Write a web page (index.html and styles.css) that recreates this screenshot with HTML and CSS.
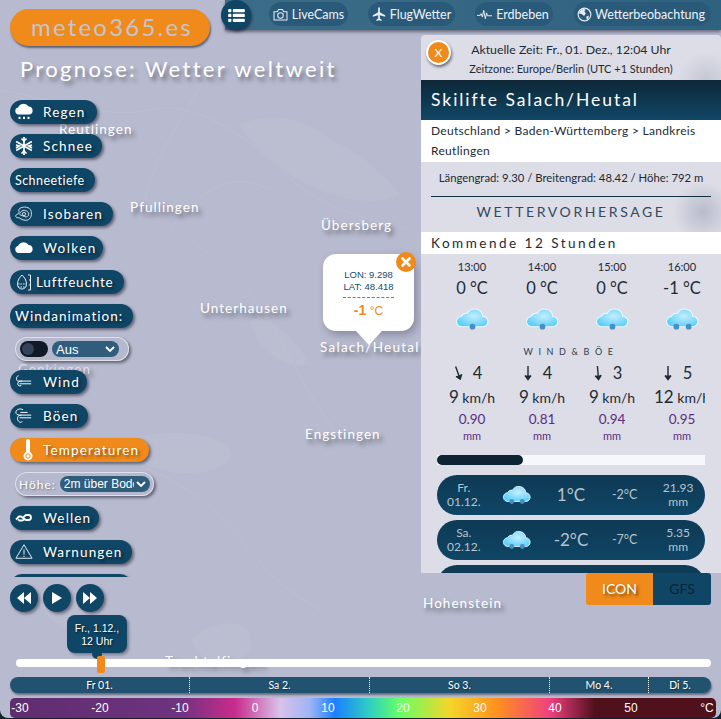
FILE: index.html
```html
<!DOCTYPE html>
<html lang="de">
<head>
<meta charset="utf-8">
<title>meteo365.es</title>
<link rel="stylesheet" href="styles.css">
</head>
<body>
<svg class="defs" width="0" height="0" aria-hidden="true">
  <defs>
    <radialGradient id="cl" cx="55%" cy="40%" r="60%">
      <stop offset="0" stop-color="#c4eefc"/>
      <stop offset="1" stop-color="#5fd0fa"/>
    </radialGradient>
    <symbol id="wx1" viewBox="0 0 34 24">
      <path d="M7 20a5 5 0 0 1-1-10 6 6 0 0 1 6-3 8 8 0 0 1 15 3 5 5 0 0 1 0 10z" fill="url(#cl)" stroke="#eafaff" stroke-width="1"/>
      <circle cx="17" cy="20" r="2.800" fill="#4a8fc4"/>
    </symbol>
    <symbol id="wx2" viewBox="0 0 34 24">
      <path d="M7 20a5 5 0 0 1-1-10 6 6 0 0 1 6-3 8 8 0 0 1 15 3 5 5 0 0 1 0 10z" fill="url(#cl)" stroke="#eafaff" stroke-width="1"/>
      <circle cx="11" cy="20" r="2.800" fill="#4a8fc4"/>
      <circle cx="23" cy="20" r="2.800" fill="#4a8fc4"/>
    </symbol>
    <symbol id="arrow" viewBox="0 0 12 16">
      <path d="M6 1v13M3 10.500 6 14.500l3-4" fill="#1d2b36" stroke="#1d2b36" stroke-width="1.400"/>
    </symbol>
  </defs>
</svg>

<div class="app">
  <div class="map">
    <svg class="map-art" viewBox="0 0 721 719" aria-hidden="true">
      <g fill="#c3c6d7" opacity=".3">
        <path d="M240 125c30-15 70-5 90 15 25 10 50 30 70 55-30 15-80 0-110-20-20-15-40-30-50-50z"/>
        <path d="M130 440c30-10 80-10 100 10 10 20-40 30-70 20-20-5-40-15-30-30z"/>
        <path d="M190 640c30-25 70-20 60 10-10 20-50 20-60-10z"/>
        <path d="M40 605c20-15 50-5 60 15-20 15-50 10-60-15z"/>
        <path d="M250 320c25-5 45 20 60 45-25 5-55-15-60-45z"/>
      </g>
      <g fill="none" stroke="#c6c9d9" stroke-width="1" opacity=".35">
        <path d="M0 90c50 10 110 30 150 20s90 20 130 60 90 50 130 60"/>
        <path d="M170 230c30-40 60-60 100-40"/>
        <path d="M215 60c-20 40-60 90-70 140"/>
        <path d="M190 240c40 30 70 60 90 100s40 70 60 100"/>
        <path d="M30 430c50 20 120 30 170 70s60 80 120 110"/>
      </g>
    </svg>
    <span class="place p-reut">Reutlingen</span>
    <span class="place p-pful">Pfullingen</span>
    <span class="place p-uber">Übersberg</span>
    <span class="place p-unte">Unterhausen</span>
    <span class="place p-sala">Salach/Heutal</span>
    <span class="place p-genk">Genkingen</span>
    <span class="place p-engs">Engstingen</span>
    <span class="place p-hohe">Hohenstein</span>
    <span class="place p-troc">Trochtelfingen</span>
    <div class="popup">
      <div class="popup-close">
        <svg viewBox="0 0 12 12" width="12" height="12"><path d="M2.500 2.500l7 7M9.500 2.500l-7 7" stroke="#fff" stroke-width="2.600" stroke-linecap="round"/></svg>
      </div>
      <div class="popup-coord">LON: 9.298</div>
      <div class="popup-coord">LAT: 48.418</div>
      <div class="popup-temp"><b>-1</b> <span>°C</span></div>
    </div>
  </div>

  <nav class="nav">
    <button class="nav-menu" aria-label="Menü">
      <svg viewBox="0 0 18 14" width="17" height="13"><g fill="#fff"><rect x="0" y="0" width="3.500" height="3.500" rx="1"/><rect x="0" y="5.200" width="3.500" height="3.500" rx="1"/><rect x="0" y="10.400" width="3.500" height="3.500" rx="1"/><rect x="5" y="0" width="13" height="3.500" rx="1"/><rect x="5" y="5.200" width="13" height="3.500" rx="1"/><rect x="5" y="10.400" width="13" height="3.500" rx="1"/></g></svg>
    </button>
    <a class="nav-pill n-live">
      <svg viewBox="0 0 16 14" width="15" height="13"><g fill="none" stroke="#e6edf2" stroke-width="1.100"><path d="M1 4h3.500L6 1.500h4L11.500 4H15v9H1z" stroke-linejoin="round"/><circle cx="8" cy="8" r="3"/></g></svg>
      LiveCams</a>
    <a class="nav-pill n-flug">
      <svg viewBox="0 0 16 16" width="14" height="14"><path d="M7 1c0-1 2-1 2 0v5l6 3.500V11L9 9.500V13l2 1.500V16l-3-1-3 1v-1.500L7 13V9.500L1 11V9.500L7 6z" fill="#e6edf2"/></svg>
      FlugWetter</a>
    <a class="nav-pill n-erd">
      <svg viewBox="0 0 18 12" width="15" height="11"><path d="M0 7h4l1-2 1.500 4L8 1l2 10 1.500-7 1 3.500H18" fill="none" stroke="#e6edf2" stroke-width="1.200"/></svg>
      Erdbeben</a>
    <a class="nav-pill n-wet">
      <svg viewBox="0 0 16 16" width="15" height="15"><circle cx="8" cy="8" r="6.800" fill="none" stroke="#e6edf2" stroke-width="1.200"/><path d="M3 4.500l3-2.500 3 .5-1 2.500L9.500 7l-2 2.500L5 7.500 2 7zM10 10l3-1-1.500 4-1.500-.5z" fill="#e6edf2"/></svg>
      Wetterbeobachtung</a>
  </nav>

  <aside class="side">
    <div class="logo">meteo365.es</div>
    <h1 class="title">Prognose: Wetter weltweit</h1>
    <div class="layers">
      <a class="btn b-regen"><svg class="ic" viewBox="0 0 18 18"><path d="M3.500 11.500A3.500 3.500 0 0 1 3 4.600 6 6 0 0 1 13.600 3.600 4 4 0 0 1 14.500 11.500z" fill="#fff"/><g fill="#fff"><rect x="3.500" y="13.800" width="2" height="2.200"/><rect x="8" y="13.800" width="2" height="2.200"/><rect x="12.500" y="13.800" width="2" height="2.200"/></g></svg><span>Regen</span></a>
      <a class="btn b-schnee"><svg class="ic" viewBox="0 0 18 18"><g stroke="#fff" stroke-width="1.700" fill="none"><path d="M9 0v18M1.200 4.500l15.600 9M16.800 4.500l-15.600 9"/><path d="M6.500 1.500 9 4l2.500-2.500M6.500 16.500 9 14l2.500 2.500M1 8l3.400 1L1 11M17 8l-3.400 1L17 11"/></g></svg><span>Schnee</span></a>
      <a class="btn btn-plain b-tiefe"><span>Schneetiefe</span></a>
      <a class="btn b-iso"><svg class="ic" viewBox="0 0 20 18"><g fill="none" stroke="#e6edf2" stroke-width="1"><path d="M5 3c4-3 12-2 13 3s-1 10-6 10-6-3-9-3-3-3 0-4 0-4 2-6z"/><path d="M7 6c2-2 7-1 8 2s-2 5-4 4-3-1-5-2 0-2 1-4z"/><circle cx="10" cy="9" r="1.800"/></g></svg><span>Isobaren</span></a>
      <a class="btn b-wolken"><svg class="ic" viewBox="0 0 18 18"><path d="M3.500 14A3.500 3.500 0 0 1 3 7.100 6 6 0 0 1 13.600 6.100 4 4 0 0 1 14.500 14z" fill="#fff"/></svg><span>Wolken</span></a>
      <a class="btn b-luft"><svg class="ic ic-luft" viewBox="0 0 14 17"><g fill="none" stroke="#e6edf2" stroke-width="1"><path d="M5 1c2.500 2.500 4.500 5 4.500 9.500a4.500 4.500 0 0 1-9 0C.5 6 2.500 3.500 5 1z"/><path d="M1 10h8M1 13h8" stroke-dasharray="1.500 1"/><path d="M11 1h2.500v15H11M12 6h1.500M12 11h1.500"/></g></svg><span>Luftfeuchte</span></a>
      <a class="btn btn-plain b-anim"><span>Windanimation:</span></a>
      <div class="group g-anim">
        <span class="toggle"><i></i></span>
        <span class="select s-aus">Aus<svg viewBox="0 0 10 6" width="10" height="6"><path d="M1 1l4 4 4-4" fill="none" stroke="#fff" stroke-width="1.800"/></svg></span>
      </div>
      <a class="btn b-wind"><svg class="ic" viewBox="0 0 20 16"><g fill="none" stroke="#fff" stroke-width="1.100"><path d="M4 1C1 2 1 5 3 7h15M5 10h13M8 7c-3 0-5 1-5 3s2 3 4 2"/></g></svg><span>Wind</span></a>
      <a class="btn b-boen"><svg class="ic" viewBox="0 0 20 18"><g fill="none" stroke="#fff" stroke-width="1.100"><path d="M9 2C5 0 1 2 1 5c0 2 2 3 4 3h13M6 5h8M5 11h13M7 8c-3 0-5 2-4 5s4 4 5 2"/></g></svg><span>Böen</span></a>
      <a class="btn btn-on b-temp"><svg class="ic ic-temp" viewBox="0 0 12 22"><path d="M4 2a2 2 0 0 1 4 0v11a4.500 4.500 0 1 1-4 0z" fill="#fff"/><circle cx="6" cy="17" r="2.200" fill="none" stroke="#ef8a1b"/></svg><span>Temperaturen</span></a>
      <div class="group g-hoehe">
        <span class="group-label">Höhe:</span>
        <span class="select s-hoehe"><em>2m über Boden</em><svg viewBox="0 0 10 6" width="10" height="6"><path d="M1 1l4 4 4-4" fill="none" stroke="#fff" stroke-width="1.800"/></svg></span>
      </div>
      <a class="btn b-wellen"><svg class="ic" viewBox="0 0 18 18"><g fill="none" stroke="#fff" stroke-width="1.800"><path d="M1 10.500 4 7.500h2l5 3.500h2.500a2 2 0 0 0 0-5H11L8.500 8"/><path d="M9.500 10.500 7 11.500H4.500L3 10.500"/></g></svg><span>Wellen</span></a>
      <a class="btn b-warn"><svg class="ic ic-warn" viewBox="0 0 20 18"><g fill="none" stroke="#e6edf2" stroke-width="1.100"><path d="M10 1.500 19 16.500H1z" stroke-linejoin="round"/><path d="M10 6.500v6M10 13.800v1.400"/></g></svg><span>Warnungen</span></a>
      <a class="btn b-warn"><span>&nbsp;</span></a>
    </div>
    <div class="player">
      <button class="round" aria-label="Zurück"><svg viewBox="0 0 14 12" width="14" height="12"><path d="M7 0v12L0 6zM14 0v12L7 6z" fill="#fff"/></svg></button>
      <button class="round" aria-label="Abspielen"><svg viewBox="0 0 10 12" width="10" height="12"><path d="M0 0v12l10-6z" fill="#fff"/></svg></button>
      <button class="round" aria-label="Vor"><svg viewBox="0 0 14 12" width="14" height="12"><path d="M0 0v12l7-6zM7 0v12l7-6z" fill="#fff"/></svg></button>
    </div>
  </aside>

  <section class="right">
    <div class="panel">
      <header class="clock">
        <button class="panel-close">X</button>
        <div class="clock-now">Aktuelle Zeit: Fr., 01. Dez., 12:04 Uhr</div>
        <div class="clock-zone">Zeitzone: Europe/Berlin (UTC +1 Stunden)</div>
      </header>
      <h2 class="station">Skilifte Salach/Heutal</h2>
      <div class="crumbs">Deutschland &gt; Baden-Württemberg &gt; Landkreis Reutlingen</div>
      <div class="geo">Längengrad: 9.30 / Breitengrad: 48.42 / Höhe: 792 m</div>
      <div class="heading">WETTERVORHERSAGE</div>
      <div class="subhead">Kommende 12 Stunden</div>
      <div class="hours">
        <div class="hour">
          <div class="h-time">13:00</div><div class="h-temp">0 °C</div>
          <svg class="h-icon"><use href="#wx1"/></svg>
          <div class="h-dir"><svg class="dir d-sw"><use href="#arrow"/></svg><span>4</span></div>
          <div class="h-speed"><b>9</b> km/h</div><div class="h-rain">0.90</div><div class="h-mm">mm</div>
        </div>
        <div class="hour">
          <div class="h-time">14:00</div><div class="h-temp">0 °C</div>
          <svg class="h-icon"><use href="#wx1"/></svg>
          <div class="h-dir"><svg class="dir"><use href="#arrow"/></svg><span>4</span></div>
          <div class="h-speed"><b>9</b> km/h</div><div class="h-rain">0.81</div><div class="h-mm">mm</div>
        </div>
        <div class="hour">
          <div class="h-time">15:00</div><div class="h-temp">0 °C</div>
          <svg class="h-icon"><use href="#wx1"/></svg>
          <div class="h-dir"><svg class="dir d-s"><use href="#arrow"/></svg><span>3</span></div>
          <div class="h-speed"><b>9</b> km/h</div><div class="h-rain">0.94</div><div class="h-mm">mm</div>
        </div>
        <div class="hour">
          <div class="h-time">16:00</div><div class="h-temp">-1 °C</div>
          <svg class="h-icon"><use href="#wx2"/></svg>
          <div class="h-dir"><svg class="dir"><use href="#arrow"/></svg><span>5</span></div>
          <div class="h-speed"><b>12</b> km/h</div><div class="h-rain">0.95</div><div class="h-mm">mm</div>
        </div>
        <div class="wind-label">WIND&amp;BÖE</div>
      </div>
      <div class="scroll"><i></i></div>
      <div class="day">
        <div class="d-date">Fr.<br>01.12.</div>
        <svg class="d-icon"><use href="#wx2"/></svg>
        <div class="d-max">1°C</div><div class="d-min">-2°C</div>
        <div class="d-rain">21.93<br>mm</div>
      </div>
      <div class="day">
        <div class="d-date">Sa.<br>02.12.</div>
        <svg class="d-icon"><use href="#wx2"/></svg>
        <div class="d-max">-2°C</div><div class="d-min">-7°C</div>
        <div class="d-rain">5.35<br>mm</div>
      </div>
      <div class="day"></div>
    </div>
    <div class="model">
      <span class="model-on">ICON</span><span class="model-off">GFS</span>
    </div>
  </section>

  <footer class="bottom">
    <div class="tip">Fr., 1.12.,<br>12 Uhr</div>
    <div class="slider"><i></i></div>
    <div class="days">
      <span class="dcell c-fr">Fr 01.</span>
      <span class="dcell c-sa">Sa 2.</span>
      <span class="dcell c-so">So 3.</span>
      <span class="dcell c-mo">Mo 4.</span>
      <span class="dcell c-di">Di 5.</span>
    </div>
    <div class="legend">
      <span>-30</span><span>-20</span><span>-10</span><span>0</span><span>10</span><span>20</span><span>30</span><span>40</span><span>50</span><span>°C</span>
    </div>
  </footer>
</div>
</body>
</html>
```
FILE: styles.css
```css
* { box-sizing: border-box; }
html, body { margin: 0; height: 100%; }
body { background: #12222b; overflow: hidden; font-family: "Lato", "Open Sans", sans-serif; color: #fff; }
.defs { position: absolute; }
a { display: inline-flex; }
button { font-family: inherit; border: 0; padding: 0; cursor: pointer; }
h1, h2 { margin: 0; font-weight: 400; }

.app {
  position: relative;
  width: 721px;
  height: 718px;
  overflow: hidden;
  border-radius: 0 0 8px 8px;
  background: #b8bbcf;
  display: grid;
  grid-template-columns: 221px 200px 300px;
  grid-template-rows: 35px 577px 106px;
}

/* map canvas */
.map { position: absolute; inset: 0; }
.map-art { position: absolute; inset: 0; width: 100%; height: 100%; }
.place {
  position: absolute;
  font-size: 13.500px;
  letter-spacing: 1.050px;
  line-height: 16px;
  white-space: nowrap;
  color: #fff;
  text-shadow: 3px 4px 4px rgba(40, 40, 50, .6);
}
.p-reut { left: 59px; top: 121px; }
.p-pful { left: 130px; top: 199px; }
.p-uber { left: 321px; top: 217px; }
.p-unte { left: 200px; top: 300px; }
.p-sala { left: 320px; top: 339px; letter-spacing: 1.250px; }
.p-genk { left: 18px; top: 361px; color: #dcdde6; }
.p-engs { left: 305px; top: 426px; }
.p-hohe { left: 423px; top: 595px; }
.p-troc { left: 165px; top: 653px; }

.popup {
  position: absolute;
  left: 323px;
  top: 254px;
  width: 91px;
  height: 77px;
  padding-top: 15px;
  border-radius: 13px;
  background: #fff;
  text-align: center;
  font-family: "Liberation Sans", Arial, sans-serif;
  box-shadow: 3px 4px 8px rgba(50, 50, 70, .35);
}
.popup::after {
  content: "";
  position: absolute;
  left: 33px;
  top: 77px;
  border-left: 13px solid transparent;
  border-right: 13px solid transparent;
  border-top: 14px solid #fff;
}
.popup-close {
  position: absolute;
  left: 73px;
  top: -2px;
  width: 20px;
  height: 20px;
  border-radius: 50%;
  background: #ef8a1b;
  display: flex;
  align-items: center;
  justify-content: center;
}
.popup-coord { font-size: 9.500px; line-height: 12px; color: #174a6a; }
.popup-temp {
  width: 51px;
  margin: 4px auto 0;
  border-top: 1px dashed #777;
  padding-top: 2px;
  color: #ef8a1b;
  font-size: 12px;
  line-height: 20px;
}
.popup-temp b { font-size: 14px; }

/* top navigation */
.nav {
  grid-column: 2 / 4;
  grid-row: 1;
  position: relative;
  align-self: start;
  height: 30px;
  margin-left: 4px;
  background: linear-gradient(90deg, #3c6d88, #2f627f);
  box-shadow: 0 2px 3px rgba(40, 40, 60, .55);
  display: flex;
  align-items: center;
  font-size: 12.500px;
  color: #eef3f6;
}
.nav-menu {
  position: absolute;
  left: -4px;
  top: 0;
  width: 30px;
  height: 30px;
  border-radius: 50%;
  background: #0f4565;
  box-shadow: 1px 2px 3px rgba(20, 20, 40, .6);
  display: flex;
  align-items: center;
  justify-content: center;
}
.nav-pill {
  position: absolute;
  top: 2px;
  height: 24px;
  border-radius: 12px;
  background: #2a5a7a;
  align-items: center;
  justify-content: center;
  gap: 4px;
  white-space: nowrap;
}
.n-live { left: 44px; width: 79px; }
.n-flug { left: 143px; width: 87px; }
.n-erd { left: 250px; width: 78px; padding-right: 2px; }
.n-wet { left: 349px; width: 137px; padding-right: 3px; gap: 3px; }

/* left column */
.side {
  grid-column: 1 / 3;
  grid-row: 1 / 3;
  position: relative;
  padding: 9px 0 0 10px;
}
.logo {
  width: 200px;
  height: 37px;
  border-radius: 19px;
  background: #ef8a1b;
  box-shadow: 1px 2px 2px rgba(40, 40, 60, .6);
  color: #c4c4d2;
  font-size: 24px;
  line-height: 36px;
  letter-spacing: 2.200px;
  padding-left: 21px;
  white-space: nowrap;
}
.title {
  margin: 8px 0 0 10px;
  height: 30px;
  font-size: 22px;
  line-height: 30px;
  letter-spacing: 2.350px;
  white-space: nowrap;
  text-shadow: 3px 4px 4px rgba(50, 50, 60, .55);
}
.layers {
  margin-top: 16px;
  height: 477px;
  overflow: hidden;
  display: flex;
  flex-direction: column;
  align-items: flex-start;
  gap: 10px;
  padding-right: 6px;
}
.btn {
  flex: none;
  height: 24px;
  border-radius: 12px;
  background: #0f4565;
  box-shadow: 2px 2px 3px rgba(30, 30, 50, .55);
  font-size: 13.500px;
  letter-spacing: 1.150px;
  align-items: center;
  padding-left: 33px;
  position: relative;
  white-space: nowrap;
  text-shadow: 2px 2px 3px rgba(0, 0, 0, .5);
}
.btn-plain { padding-left: 5px; font-size: 13px; letter-spacing: .75px; }
.btn-on { background: #ef8a1b; }
.ic { position: absolute; left: 5px; top: 3px; width: 18px; height: 18px; }
.ic-luft { left: 7px; top: 4px; width: 14px; height: 17px; }
.ic-temp { left: 12px; top: 1px; width: 12px; height: 22px; }
.ic-warn { left: 5px; width: 18px; height: 17px; top: 3px; }
.b-regen { width: 87px; }
.b-schnee { width: 92px; }
.b-tiefe { width: 85px; letter-spacing: .45px; font-size: 12.500px; }
.b-iso { width: 103px; }
.b-wolken { width: 93px; letter-spacing: 1.400px; }
.b-luft { width: 114px; padding-left: 26px; letter-spacing: .8px; }
.b-anim { width: 123px; font-size: 13.500px; letter-spacing: 1px; }
.b-wind { width: 77px; }
.b-boen { width: 78px; }
.b-temp { width: 139px; }
.b-wellen { width: 89px; }
.b-warn { width: 122px; }

.group {
  flex: none;
  height: 24px;
  margin-left: 5px;
  border-radius: 12px;
  background: #b6b9cd;
  box-shadow: 0 0 0 1px #dfe0e8 inset, 2px 2px 3px rgba(30, 30, 50, .55);
  display: flex;
  align-items: center;
  position: relative;
}
.g-anim { width: 114px; margin-block: -1px; padding-left: 5px; gap: 4px; }
.g-hoehe { width: 139px; padding-left: 4px; gap: 4px; }
.group-label { font-size: 12px; letter-spacing: 1px; color: #fff; text-shadow: 1px 1px 2px rgba(0, 0, 0, .4); }
.toggle {
  width: 28px;
  height: 16px;
  border-radius: 8px;
  background: #0f1a26;
  position: relative;
}
.toggle i {
  position: absolute;
  left: 2px;
  top: 2px;
  width: 12px;
  height: 12px;
  border-radius: 50%;
  background: #34425a;
}
.select {
  height: 16px;
  border-radius: 8px;
  background: #315d7d;
  display: flex;
  align-items: center;
  justify-content: space-between;
  font-family: "Liberation Sans", Arial, sans-serif;
  font-size: 12px;
  padding: 0 4px;
}
.s-aus { width: 67px; font-size: 13px; padding-left: 4px; }
.s-hoehe { width: 90px; }
.s-hoehe em {
  font-style: normal;
  width: 70px;
  overflow: hidden;
  white-space: nowrap;
}

.player { margin-top: 7px; display: flex; gap: 5px; }
.round {
  width: 28px;
  height: 28px;
  border-radius: 50%;
  background: #0f4565;
  box-shadow: 2px 2px 3px rgba(30, 30, 50, .5);
  display: flex;
  align-items: center;
  justify-content: center;
}

/* right column */
.right { grid-column: 3; grid-row: 2 / 4; position: relative; }
.panel {
  height: 538px;
  overflow: hidden;
  background:
    radial-gradient(circle at 282px 177px, rgba(140, 146, 170, .45), transparent 30px),
    radial-gradient(circle at 285px 45px, rgba(140, 146, 170, .3), transparent 28px),
    #dcdde6;
  border-radius: 4px 4px 0 0;
  color: #1d2b36;
}
.clock { position: relative; height: 45px; text-align: center; padding-left: 49px; }
.panel-close {
  position: absolute;
  left: 5px;
  top: 5px;
  width: 25px;
  height: 25px;
  border-radius: 50%;
  background: #ef8a1b;
  border: 2px solid #fff;
  box-shadow: 1px 2px 3px rgba(30, 30, 50, .6);
  color: #fff;
  font-size: 12px;
}
.clock-now { font-size: 12.300px; line-height: 16px; padding-top: 7px; width: 202px; white-space: nowrap; }
.clock-zone { font-size: 11px; line-height: 14px; padding-top: 4px; margin-left: -2px; width: 206px; white-space: nowrap; }
.station {
  height: 40px;
  padding-left: 10px;
  background: linear-gradient(180deg, #0d2737, #104766);
  color: #fff;
  font-size: 17.500px;
  letter-spacing: 1.950px;
  line-height: 40px;
  white-space: nowrap;
}
.crumbs {
  height: 42px;
  padding: 1px 10px;
  background: #fff;
  font-size: 12px;
  line-height: 20px;
  letter-spacing: .3px;
}
.geo {
  height: 35px;
  margin: 0 10px;
  border-bottom: 1px solid #12303f;
  text-align: center;
  font-size: 11.300px;
  line-height: 31px;
  white-space: nowrap;
}
.heading {
  height: 35px;
  text-align: center;
  font-size: 14px;
  line-height: 30px;
  letter-spacing: 2.600px;
  color: #34495a;
}
.subhead {
  height: 22px;
  padding-left: 10px;
  background: #fff;
  font-size: 13.500px;
  line-height: 22px;
  letter-spacing: 2.500px;
}
.hours {
  position: relative;
  margin: 0 16px;
  height: 201px;
  overflow: hidden;
  display: flex;
  padding-top: 5px;
}
.hour { flex: 0 0 70px; text-align: center; }
.h-time { font-size: 11px; line-height: 16px; }
.h-temp { font-size: 16.500px; line-height: 20px; margin-top: 3px; }
.h-icon { display: block; width: 35px; height: 25px; margin: 8px auto 0; overflow: visible; }
.h-dir {
  margin-top: 30px;
  height: 24px;
  display: flex;
  justify-content: center;
  align-items: center;
  gap: 9px;
  padding-right: 10px;
  font-size: 16.500px;
}
.dir { width: 12px; height: 16px; }
.d-sw { transform: rotate(-20deg); }
.d-s { transform: rotate(-5deg); }
.h-speed { font-size: 14px; line-height: 24px; white-space: nowrap; }
.h-speed b { font-weight: 400; font-size: 17px; }
.h-rain { font-size: 13.500px; line-height: 19px; color: #5b2c83; }
.h-mm { font-size: 11px; line-height: 14px; color: #5b2c83; }
.wind-label {
  position: absolute;
  left: 0;
  right: 0;
  top: 92px;
  text-align: center;
  font-size: 9px;
  line-height: 12px;
  letter-spacing: 5.600px;
  color: #2c3e4b;
}
.scroll { margin: 0 16px 10px; height: 10px; background: #f6f7fa; }
.scroll i { display: block; width: 86px; height: 10px; border-radius: 5px; background: #0d2433; }
.day {
  margin: 0 16px 5px;
  height: 40px;
  flex: none;
  border-radius: 20px;
  background: linear-gradient(180deg, #0e3a55, #0f4565);
  display: grid;
  grid-template-columns: repeat(5, 1fr);
  align-items: center;
  text-align: center;
  color: #b7c4cf;
  font-size: 12px;
  line-height: 14px;
}
.d-icon { width: 30px; height: 21px; justify-self: center; margin-top: -2px; }
.d-max { font-size: 17px; }
.d-min { font-size: 12.500px; }

.model {
  position: absolute;
  left: 165px;
  top: 538px;
  width: 125px;
  height: 32px;
  display: flex;
  font-size: 14px;
  line-height: 32px;
  text-align: center;
}
.model-on {
  width: 67px;
  background: #ef8a1b;
  border-radius: 3px 0 0 3px;
  color: #fff;
  text-shadow: 2px 2px 3px rgba(0, 0, 0, .5);
}
.model-off {
  width: 58px;
  background: #0f4565;
  border-radius: 0 3px 3px 0;
  color: #0d2433;
}

/* timeline */
.bottom {
  grid-column: 1 / 4;
  grid-row: 3;
  position: relative;
  padding-top: 47px;
}
.tip {
  position: absolute;
  left: 67px;
  top: 3px;
  width: 60px;
  height: 38px;
  border-radius: 8px;
  background: #0f4565;
  box-shadow: 2px 2px 3px rgba(30, 30, 50, .4);
  font-family: "Liberation Sans", Arial, sans-serif;
  font-size: 10.500px;
  line-height: 13px;
  text-align: center;
  padding-top: 7px;
  text-shadow: 1px 1px 2px rgba(0, 0, 0, .6);
}
.tip::after {
  content: "";
  position: absolute;
  left: 25px;
  top: 34px;
  width: 10px;
  height: 10px;
  border-radius: 50%;
  background: #0f4565;
}
.slider {
  position: relative;
  margin: 0 10px 0 16px;
  height: 8px;
  border-radius: 4px;
  background: #fff;
}
.slider i {
  position: absolute;
  left: 81px;
  top: -3px;
  width: 8px;
  height: 17px;
  border-radius: 2px;
  background: #ef8a1b;
}
.days {
  display: flex;
  height: 16px;
  margin: 10px 10px 0;
  border-radius: 8px;
  background: #215371;
  box-shadow: 1px 2px 2px rgba(30, 30, 50, .5);
  font-family: "Lato", sans-serif;
  font-size: 10.500px;
  line-height: 16px;
  text-align: center;
  overflow: hidden;
}
.dcell { border-right: 1px dotted #fff; text-shadow: 1px 1px 2px rgba(0, 0, 0, .5); }
.c-fr { width: 180px; }
.c-sa { width: 180px; }
.c-so { width: 180px; }
.c-mo { width: 99px; }
.c-di { flex: 1; border-right: 0; }
.legend {
  position: relative;
  height: 20px;
  margin: 5px 5px 0 10px;
  border-radius: 5px;
  background: linear-gradient(90deg, #5e2d6f 0, #6f3380 170px, #c92b8c 225px, #d9c2ea 270px, #9fb4f5 300px, #1a80ff 325px, #30d0c0 360px, #66ff66 390px, #f5d528 440px, #ff9020 487px, #ef4080 540px, #50101c 585px, #50101c 100%);
  font-family: "Liberation Sans", Arial, sans-serif;
  font-size: 12px;
  line-height: 20px;
}
.legend span { position: absolute; top: 0; transform: translateX(-50%); }
.legend span:nth-child(1) { left: 10px; }
.legend span:nth-child(2) { left: 90px; }
.legend span:nth-child(3) { left: 170px; }
.legend span:nth-child(4) { left: 245px; }
.legend span:nth-child(5) { left: 318px; }
.legend span:nth-child(6) { left: 393px; }
.legend span:nth-child(7) { left: 470px; }
.legend span:nth-child(8) { left: 545px; }
.legend span:nth-child(9) { left: 621px; }
.legend span:nth-child(10) { left: 697px; }
```
